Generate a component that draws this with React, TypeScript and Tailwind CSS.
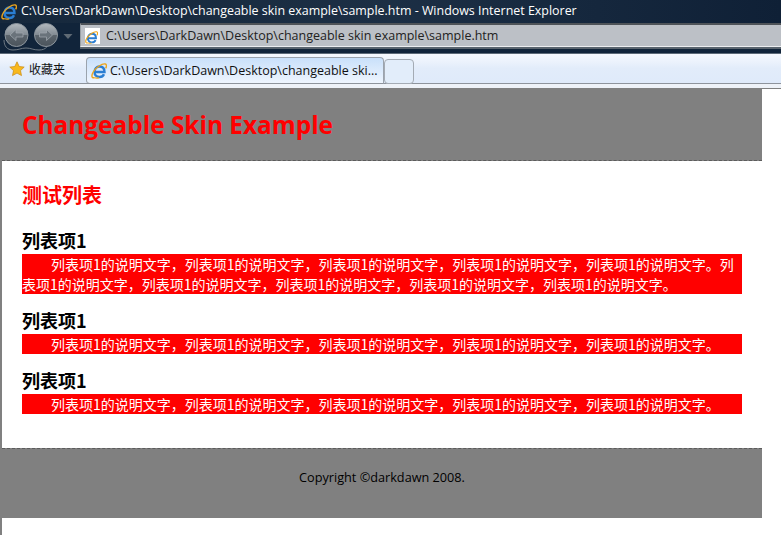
import React from "react";

const cjk = '"Noto Sans CJK SC", "Noto Sans", sans-serif';
const latin = '"Open Sans", sans-serif';

function IeIcon({ size = 16 }: { size?: number }) {
  return (
    <svg width={size} height={size} viewBox="0 0 16 16" className="shrink-0">
      <path d="M4.500 9H13.500C13.500 5 11.300 3.500 8.500 3.500 5.700 3.500 3.500 5.700 3.500 9c0 3.200 2.200 5 5 5 2.200 0 3.700-1 4.500-2.800" fill="none" stroke="#2a7ed3" strokeWidth="2.400" />
      <path d="M3.500 14.500C.2 15.800.3 12 2.500 8.500 5 4.500 11 .3 14.300 1c1.700.5 1.300 2.800.3 4.300" fill="none" stroke="#eda51c" strokeWidth="1.400" />
      <path d="M3.500 14.500c1.700 1 3.300.8 4.700.2" fill="none" stroke="#eda51c" strokeWidth="1.200" />
    </svg>
  );
}

function NavCluster() {
  return (
    <svg width="76" height="30" viewBox="0 0 76 30" className="shrink-0">
      <defs>
        <linearGradient id="glass" x1="0" y1="0" x2="0" y2="1">
          <stop offset="0" stopColor="#b4babf" />
          <stop offset="0.48" stopColor="#838c94" />
          <stop offset="0.52" stopColor="#5b646c" />
          <stop offset="1" stopColor="#4a535b" />
        </linearGradient>
      </defs>
      <path d="M3 17c0 6 3 10 9 10 6 0 8-2 13-2 5 0 7 2 13 2 7 0 10-4 10-10" fill="none" stroke="#6f7a84" strokeWidth="1" />
      <circle cx="15.500" cy="12" r="11.500" fill="url(#glass)" stroke="#8c959d" />
      <circle cx="45" cy="12" r="11.500" fill="url(#glass)" stroke="#8c959d" />
      <path d="M9 12l6-5.500V10h7v4h-7v3.500Z" fill="#6a737b" stroke="#a4abb1" strokeWidth=".7" />
      <path d="M51.500 12l-6-5.500V10h-7v4h7v3.500Z" fill="#6a737b" stroke="#a4abb1" strokeWidth=".7" />
      <path d="M62.500 11h9l-4.500 5Z" fill="#5f6a74" />
    </svg>
  );
}

function Item({ long }: { long?: boolean }) {
  const s = "列表项1的说明文字，列表项1的说明文字，列表项1的说明文字，列表项1的说明文字，列表项1的说明文字。";
  return (
    <div className="mb-[13px]">
      <h3 className="text-[18px] leading-[27px] font-bold text-black">列表项1</h3>
      <p className="w-[720px] bg-[#ff0000] text-white text-[14px] leading-[20px] indent-[29px]">
        {s}
        {long ? s : ""}
      </p>
    </div>
  );
}

export default function App() {
  return (
    <div className="w-[781px] h-[535px] overflow-hidden flex flex-col bg-white" style={{ fontFamily: cjk }}>
      <div className="h-[23px] flex items-center pl-[1px] gap-[4px] bg-gradient-to-r from-[#16283c] via-[#1c2f45] to-[#0f2036]">
        <IeIcon />
        <span className="text-white text-[12.450px] leading-none whitespace-nowrap" style={{ fontFamily: latin }}>
          C:\Users\DarkDawn\Desktop\changeable skin example\sample.htm - Windows Internet Explorer
        </span>
      </div>
      <div className="h-[31px] flex items-start bg-[#11243a] border-b border-[#5d6a78]">
        <div className="w-[80px] pl-[1px]">
          <NavCluster />
        </div>
        <div className="flex-1 h-[26px] flex flex-col">
          <div className="h-[24px] flex items-center gap-[6px] pl-[4px] border-t-2 border-b border-l border-t-[#4e5358] border-b-[#eceef0] border-l-[#9aa0a6] bg-[#bcc0c6]">
            <div className="w-[15px] h-[16px] bg-white flex items-end">
              <IeIcon size={13} />
            </div>
            <span className="pt-[2px] text-[12.500px] text-[#222] whitespace-nowrap" style={{ fontFamily: latin }}>
              C:\Users\DarkDawn\Desktop\changeable skin example\sample.htm
            </span>
          </div>
          <div className="h-[2px] bg-[#5a646e]" />
        </div>
      </div>
      <div className="h-[30px] flex items-start pt-[3px] bg-gradient-to-b from-[#f6f9fe] via-[#e2ecfa] to-[#dfeafa] border-b border-[#8e949c]">
        <div className="w-[86px] h-[24px] flex items-center pl-[9px] gap-[4px] text-[12px] text-[#111]">
          <svg width="16" height="16" viewBox="0 0 16 16">
            <path d="m8 .8 2.200 4.700 5 .6-3.700 3.500 1 5L8 12.100 3.500 14.600l1-5L.8 6.100l5-.6Z" fill="#f8b81c" stroke="#c88a12" strokeWidth=".7" />
          </svg>
          <span>收藏夹</span>
        </div>
        <div className="w-[298px] h-[27px] flex items-center gap-[3px] pl-[4px] rounded-t-[4px] rounded-bl-[4px] border border-[#9ba3ad] border-b-[#8e949c] bg-gradient-to-b from-[#c9e0fa] to-[#eef5fe]">
          <IeIcon />
          <span className="pt-[2px] text-[12.500px] text-[#111] whitespace-nowrap" style={{ fontFamily: latin }}>
            C:\Users\DarkDawn\Desktop\changeable ski...
          </span>
        </div>
        <div className="w-[30px] h-[25px] mt-[2px] rounded-[4px] border border-[#a4abb4] bg-[#e2edfa]" />
      </div>
      <div className="h-[4px] bg-[#eef2f8]" />
      <div className="flex-1 border-l-2 border-t border-[#808080]">
        <div className="w-[760px]">
          <div className="h-[72px] px-[20px] pt-[1px] flex items-center bg-[#808080] border-b border-dashed border-[#5c5c5c]">
            <h1 className="text-[24.400px] font-bold text-[#ff0000] whitespace-nowrap" style={{ fontFamily: latin }}>
              Changeable Skin Example
            </h1>
          </div>
          <div className="h-[287px] px-[20px] pt-[20px]">
            <h2 className="text-[20px] leading-[28px] font-bold text-[#ff0000] mb-[18px]">测试列表</h2>
            <Item long />
            <Item />
            <Item />
          </div>
          <div className="h-[70px] pt-[18px] text-center text-[12.700px] leading-[20px] text-black bg-[#808080] border-t border-dashed border-[#5c5c5c]" style={{ fontFamily: latin }}>
            Copyright ©darkdawn 2008.
          </div>
        </div>
      </div>
    </div>
  );
}
